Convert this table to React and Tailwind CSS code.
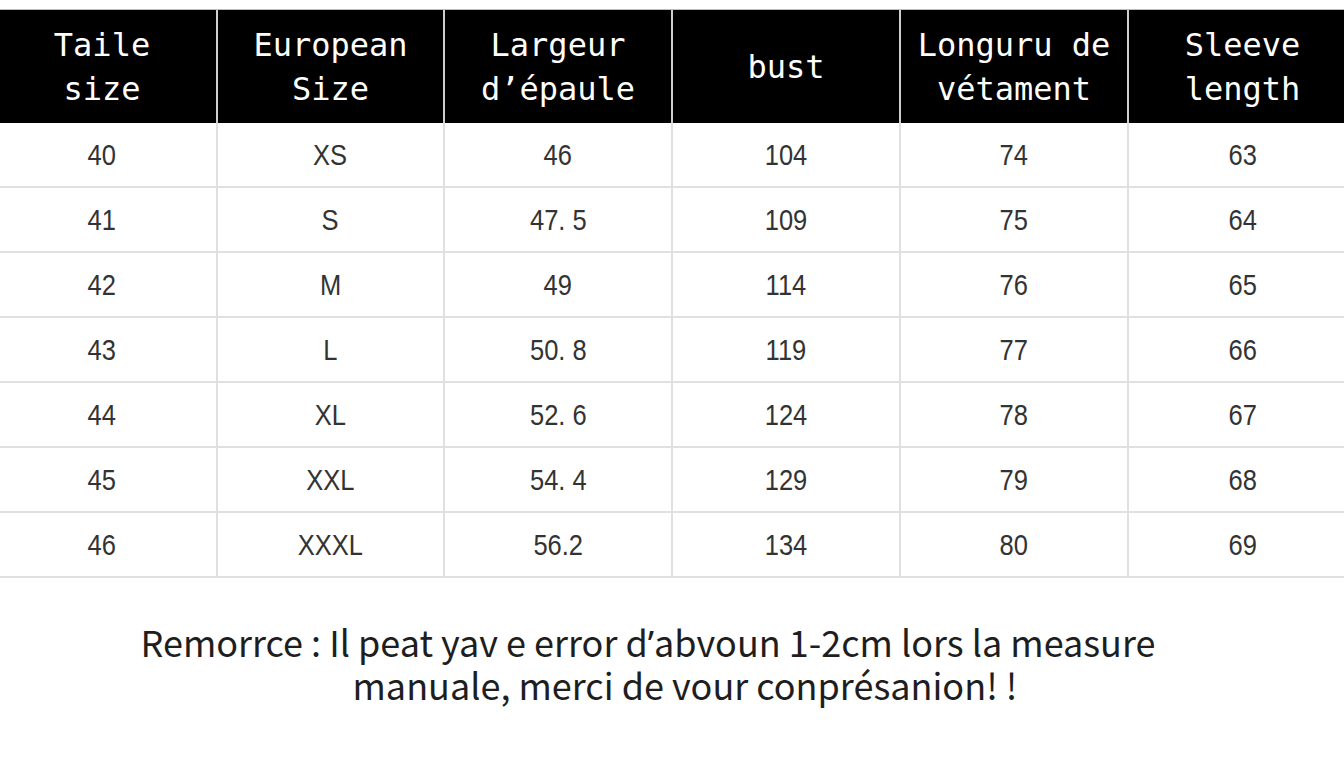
import React from "react";

const headers = [
  ["Taile", "size"],
  ["European", "Size"],
  ["Largeur", "d’épaule"],
  ["bust"],
  ["Longuru de", "vétament"],
  ["Sleeve", "length"],
];

const rows = [
  ["40", "XS", "46", "104", "74", "63"],
  ["41", "S", "47. 5", "109", "75", "64"],
  ["42", "M", "49", "114", "76", "65"],
  ["43", "L", "50. 8", "119", "77", "66"],
  ["44", "XL", "52. 6", "124", "78", "67"],
  ["45", "XXL", "54. 4", "129", "79", "68"],
  ["46", "XXXL", "56.2", "134", "80", "69"],
];

const cols = "grid grid-cols-[216px_227px_228px_228px_228px_1fr]";

// first column is cut on the left, last one on the right
const edge = (i) => (i === 0 ? "pr-[12px]" : i === 5 ? "pl-[12px]" : "");

const App = () => {
  return (
    <div className="w-[1344px] h-[768px] bg-white overflow-hidden pt-[9px]">
      <div className="border-t border-[#bdbdbd]">
        <div className={`${cols} h-[113px] bg-black`}>
          {headers.map((h, i) => (
            <div
              key={i}
              className={`flex flex-col items-center justify-center text-white text-[32px] leading-[44px] font-['DejaVu_Sans_Mono',monospace] ${edge(i)} ${
                i > 0 ? "border-l-2 border-[#cfcfcf]" : ""
              }`}
            >
              {h.map((line) => (
                <span key={line} className="whitespace-pre">
                  {line}
                </span>
              ))}
            </div>
          ))}
        </div>

        {rows.map((r, ri) => (
          <div key={ri} className={`${cols} h-[65px] border-b-2 border-[#e0e0e0]`}>
            {r.map((c, ci) => (
              <div
                key={ci}
                className={`flex items-center justify-center text-[#333] font-['Liberation_Sans',Arial,sans-serif] ${edge(ci)} ${
                  ci > 0 ? "border-l-2 border-[#e0e0e0]" : ""
                }`}
              >
                <span className="inline-block text-[30px] scale-x-85 whitespace-pre">{c}</span>
              </div>
            ))}
          </div>
        ))}
      </div>

      <div className="mt-[43px] pr-[48px] text-center text-[36px] leading-[41px] text-[#1e1e1e] font-['Noto_Sans_CJK_SC','Noto_Sans',sans-serif]">
        <p>
          Remorrce : Il peat yav e error d<span className="font-['Noto_Sans',sans-serif]">’</span>abvoun 1-2cm lors la measure
        </p>
        <p className="pl-[74px]">manuale, merci de vour conprésanion! !</p>
      </div>
    </div>
  );
};

export default App;
